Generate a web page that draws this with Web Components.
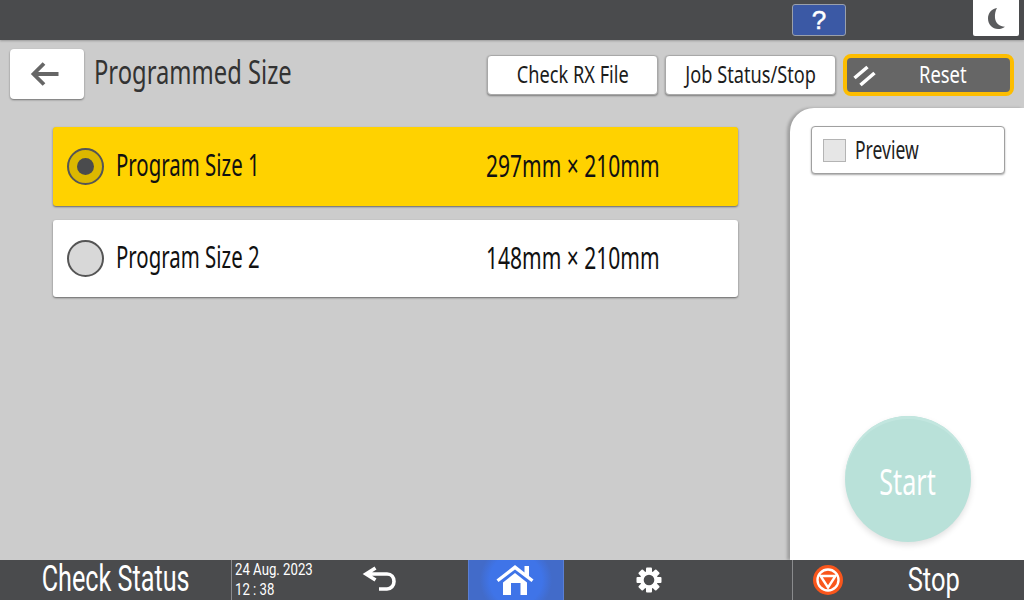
<!DOCTYPE html>
<html lang="en">
<head>
<meta charset="utf-8">
<title>Programmed Size</title>
<style>
  html, body { margin: 0; padding: 0; height: 100%; }
  body { font-family: "Noto Sans", "Open Sans", sans-serif; overflow: hidden; }
</style>
</head>
<body>
<panel-screen></panel-screen>

<script>
// condensed text: the panel font is narrow, so squeeze the real text horizontally
class NarrowText extends HTMLElement {
    connectedCallback() {
        this.attachShadow({ mode: 'open' });
        this.shadowRoot.innerHTML = `
            <style>
                :host {
                    display: inline-block;
                    white-space: nowrap;
                    transform: scaleX(var(--squeeze, 0.76));
                    transform-origin: var(--origin, center) center;
                }
            </style>
            <slot></slot>
        `;
    }
}

class TopBar extends HTMLElement {
    connectedCallback() {
        this.attachShadow({ mode: 'open' });
        this.shadowRoot.innerHTML = `
            <style>
                :host {
                    display: flex;
                    height: 40px;
                    background: #4a4b4d;
                    box-sizing: border-box;
                    padding: 0 5px 0 792px;
                    box-shadow: 0 1px 2px rgba(0, 0, 0, 0.25);
                    position: relative;
                    z-index: 2;
                }
                .help {
                    width: 54px;
                    height: 32px;
                    margin-top: 4px;
                    box-sizing: border-box;
                    background: #3b59a5;
                    border: 1px solid #9aa0ab;
                    border-radius: 3px;
                    color: #fff;
                    font: 400 26px/30px "Liberation Sans", sans-serif;
                    -webkit-text-stroke: 0.5px #fff;
                    text-align: center;
                }
                .mode {
                    width: 46px;
                    height: 36px;
                    margin-left: auto;
                    background: #fff;
                    border-radius: 0 0 2px 2px;
                    display: flex;
                    align-items: center;
                    justify-content: center;
                }
            </style>
            <div class="help">?</div>
            <div class="mode">
                <svg width="24" height="24" viewBox="0 0 24 24"><path d="M13 2C7.500 3 4 7 4 12.500C4 18.500 8.500 23 14 23C16.500 23 19 22.200 21 20.700C15.500 20.700 11.500 17 11 12C10.700 8 11.500 4.500 13 2Z" fill="#5a5b5d"/></svg>
            </div>
        `;
    }
}

class ActionButton extends HTMLElement {
    connectedCallback() {
        this.attachShadow({ mode: 'open' });
        this.shadowRoot.innerHTML = `
            <style>
                :host {
                    display: flex;
                    align-items: center;
                    justify-content: center;
                    width: 171px;
                    height: 40px;
                    box-sizing: border-box;
                    padding-bottom: 2px;
                    background: #fff;
                    border: 1px solid #a8a8a8;
                    border-radius: 4px;
                    box-shadow: 0 1px 2px rgba(0, 0, 0, 0.4);
                    color: #1c1c1c;
                    font-size: 23px;
                    --squeeze: 0.79;
                }
            </style>
            <slot></slot>
        `;
    }
}

class ResetButton extends HTMLElement {
    connectedCallback() {
        this.attachShadow({ mode: 'open' });
        this.shadowRoot.innerHTML = `
            <style>
                :host {
                    display: flex;
                    align-items: center;
                    width: 171px;
                    height: 42px;
                    box-sizing: border-box;
                    padding-left: 6px;
                    padding-bottom: 2px;
                    background: #666;
                    border: 4px solid #fdbd00;
                    border-radius: 8px;
                    color: #fff;
                    font-size: 23px;
                    --squeeze: 0.8;
                }
                svg { flex: none; margin-top: 2px; }
                .label { flex: 1; text-align: center; padding-right: 2px; }
            </style>
            <svg width="24" height="24" viewBox="0 0 24 24"><path d="M1.500 15L14.500 4M7.500 22L21.500 10" stroke="#fff" stroke-width="3.600" fill="none"/></svg>
            <div class="label"><slot></slot></div>
        `;
    }
}

class PageHeader extends HTMLElement {
    connectedCallback() {
        this.attachShadow({ mode: 'open' });
        this.shadowRoot.innerHTML = `
            <style>
                :host {
                    display: flex;
                    height: 68px;
                    box-sizing: border-box;
                    padding: 9px 10px 0 10px;
                }
                .back {
                    flex: none;
                    width: 74px;
                    height: 50px;
                    background: #fff;
                    border-radius: 4px;
                    box-shadow: 0 1px 2px rgba(0, 0, 0, 0.45);
                    display: flex;
                    align-items: center;
                    justify-content: center;
                }
                .back svg { margin-right: 4px; }
                .title {
                    flex: 1;
                    height: 50px;
                    padding-left: 10px;
                    font-size: 33px;
                    line-height: 46px;
                    color: #333;
                    --origin: left;
                    --squeeze: 0.72;
                }
                .actions {
                    display: flex;
                    gap: 7px;
                    padding-top: 6px;
                    align-items: flex-start;
                }
                reset-button { margin-top: -1px; }
            </style>
            <div class="back">
                <svg width="30" height="26" viewBox="0 0 30 26"><path d="M28.500 13H4M14 2.500L3.500 13L14 23.500" stroke="#666" stroke-width="3.800" fill="none"/></svg>
            </div>
            <div class="title"><narrow-text>Programmed Size</narrow-text></div>
            <div class="actions">
                <action-button><narrow-text>Check RX File</narrow-text></action-button>
                <action-button><narrow-text>Job Status/Stop</narrow-text></action-button>
                <reset-button><narrow-text>Reset</narrow-text></reset-button>
            </div>
        `;
    }
}

class SizeRow extends HTMLElement {
    connectedCallback() {
        this.attachShadow({ mode: 'open' });
        const on = this.hasAttribute('selected');
        this.shadowRoot.innerHTML = `
            <style>
                :host {
                    display: flex;
                    align-items: center;
                    height: ${on ? 79 : 77}px;
                    box-sizing: border-box;
                    padding-left: 14px;
                    background: ${on ? '#ffd200' : '#fff'};
                    border-radius: 3px;
                    box-shadow: 0 1px 2px rgba(0, 0, 0, 0.5);
                    color: #111;
                    font-size: 30px;
                    --origin: left;
                }
                .radio {
                    flex: none;
                    width: 37px;
                    height: 37px;
                    box-sizing: border-box;
                    border-radius: 50%;
                    border: 2px solid #555;
                    background: ${on ? '#dcb800' : '#d8d8d8'};
                    display: flex;
                    align-items: center;
                    justify-content: center;
                }
                .dot {
                    width: 17px;
                    height: 17px;
                    border-radius: 50%;
                    background: #4a4b4d;
                    display: ${on ? 'block' : 'none'};
                }
                .name { width: 370px; margin-left: 12px; padding-bottom: 5px; --squeeze: 0.68; }
                .dims { padding-bottom: 3px; --squeeze: 0.7; }
            </style>
            <div class="radio"><div class="dot"></div></div>
            <div class="name"><slot name="name"></slot></div>
            <div class="dims"><slot name="dims"></slot></div>
        `;
    }
}

class PreviewToggle extends HTMLElement {
    connectedCallback() {
        this.attachShadow({ mode: 'open' });
        this.shadowRoot.innerHTML = `
            <style>
                :host {
                    display: flex;
                    align-items: center;
                    height: 48px;
                    box-sizing: border-box;
                    padding: 0 0 3px 11px;
                    background: #fff;
                    border: 1px solid #a0a0a0;
                    border-radius: 4px;
                    box-shadow: 0 1px 2px rgba(0, 0, 0, 0.35);
                    color: #222;
                    font-size: 25px;
                    --origin: left;
                    --squeeze: 0.7;
                }
                .box {
                    flex: none;
                    width: 23px;
                    height: 23px;
                    margin-top: 3px;
                    box-sizing: border-box;
                    background: #e6e6e6;
                    border: 1px solid #b4b4b4;
                    margin-right: 9px;
                }
            </style>
            <div class="box"></div>
            <slot></slot>
        `;
    }
}

class StartButton extends HTMLElement {
    connectedCallback() {
        this.attachShadow({ mode: 'open' });
        this.shadowRoot.innerHTML = `
            <style>
                :host {
                    display: flex;
                    align-items: center;
                    justify-content: center;
                    width: 126px;
                    height: 126px;
                    box-sizing: border-box;
                    padding-top: 3px;
                    border-radius: 50%;
                    background: #b9e1d9;
                    box-shadow: inset 0 3px 0 #c2e6df, 0 3px 6px rgba(0, 0, 0, 0.12);
                    color: #fff;
                    font-size: 37px;
                    --squeeze: 0.68;
                }
            </style>
            <slot></slot>
        `;
    }
}

class SidePanel extends HTMLElement {
    connectedCallback() {
        this.attachShadow({ mode: 'open' });
        this.shadowRoot.innerHTML = `
            <style>
                :host {
                    display: flex;
                    flex-direction: column;
                    width: 234px;
                    flex: none;
                    box-sizing: border-box;
                    padding: 18px 19px 18px 21px;
                    background: #fff;
                    border-radius: 24px 0 0 0;
                    box-shadow: -3px 0 3px rgba(0, 0, 0, 0.22);
                }
                .start { margin-top: auto; align-self: center; }
            </style>
            <preview-toggle><narrow-text>Preview</narrow-text></preview-toggle>
            <div class="start"><start-button><narrow-text>Start</narrow-text></start-button></div>
        `;
    }
}

class BottomBar extends HTMLElement {
    connectedCallback() {
        this.attachShadow({ mode: 'open' });
        this.shadowRoot.innerHTML = `
            <style>
                :host {
                    display: flex;
                    height: 40px;
                    background: #4a4b4d;
                    color: #fff;
                    font-family: Roboto, "Noto Sans", sans-serif;
                    position: relative;
                    z-index: 2;
                }
                .cell { display: flex; align-items: center; justify-content: center; box-sizing: border-box; }
                .check { width: 231px; font-size: 36px; line-height: 38px; align-items: flex-start; --squeeze: 0.7; }
                .date {
                    width: 105px;
                    display: block;
                    padding: 0 0 0 3px;
                    border-left: 1px solid #8a8b8d;
                    font-size: 16.500px;
                    line-height: 19.500px;
                    --origin: left;
                    --squeeze: 0.8;
                }
                .date div { white-space: nowrap; }
                .undo { width: 88px; }
                .undo svg { margin-top: -4px; }
                .gap { width: 44px; }
                .home {
                    width: 96px;
                    background: radial-gradient(circle at 50% 50%, #3f74e8 0, #3f74e8 26px, #426bc9 36px);
                    border-left: 1px solid #5a7fd4;
                    border-right: 1px solid #5a7fd4;
                }
                .gear { width: 170px; }
                .gap2 { width: 58px; }
                .stop {
                    flex: 1;
                    justify-content: flex-start;
                    border-left: 1px solid #8a8b8d;
                    padding-left: 20px;
                    font-size: 34px;
                    line-height: 38px;
                    --squeeze: 0.75;
                }
                .stop .label { flex: 1; text-align: center; padding-bottom: 2px; }
            </style>
            <div class="cell check"><narrow-text>Check Status</narrow-text></div>
            <div class="cell date">
                <div><narrow-text>24 Aug. 2023</narrow-text></div>
                <div><narrow-text>12 : 38</narrow-text></div>
            </div>
            <div class="cell undo">
                <svg width="36" height="28" viewBox="0 0 36 28"><path d="M13.500 4L4 10L13.500 16M4.500 10H25C29.500 10 32 13.500 32 17.500C32 21.500 29 25 25 25H17" fill="none" stroke="#fff" stroke-width="3.600"/></svg>
            </div>
            <div class="gap"></div>
            <div class="cell home">
                <svg width="40" height="34" viewBox="0 0 40 34"><path d="M0.500 16.500L19 2L28.500 9.500V3H33V13L37.500 16.500L35.500 19L19 6.500L2.500 19Z" fill="#fff"/><path d="M7 19.500L19 10L31 19.500V32H7ZM15 20V32H24.500V20Z" fill="#fff" fill-rule="evenodd"/></svg>
            </div>
            <div class="cell gear">
                <svg width="26" height="26" viewBox="-13 -13 26 26">
                    <g fill="#fff">
                        <rect x="-3" y="-12.500" width="6" height="25" rx="1"/>
                        <rect x="-3" y="-12.500" width="6" height="25" rx="1" transform="rotate(45)"/>
                        <rect x="-3" y="-12.500" width="6" height="25" rx="1" transform="rotate(90)"/>
                        <rect x="-3" y="-12.500" width="6" height="25" rx="1" transform="rotate(135)"/>
                    </g>
                    <circle r="9" fill="#fff"/>
                    <circle r="5.300" fill="#4a4b4d"/>
                </svg>
            </div>
            <div class="gap2"></div>
            <div class="cell stop">
                <svg width="30" height="30" viewBox="0 0 30 30"><circle cx="15" cy="15" r="15" fill="#f9561c"/><circle cx="15" cy="15" r="10.500" fill="none" stroke="#fff" stroke-width="2.400"/><path d="M7.500 11H22.500L15 22.500Z" fill="none" stroke="#fff" stroke-width="2.400"/></svg>
                <div class="label"><narrow-text>Stop</narrow-text></div>
            </div>
        `;
    }
}

class PanelScreen extends HTMLElement {
    connectedCallback() {
        this.attachShadow({ mode: 'open' });
        this.shadowRoot.innerHTML = `
            <style>
                :host {
                    display: flex;
                    flex-direction: column;
                    width: 1024px;
                    height: 600px;
                    background: #cccccc;
                }
                .content { flex: 1; display: flex; min-height: 0; }
                .list {
                    flex: 1;
                    display: flex;
                    flex-direction: column;
                    gap: 14px;
                    padding: 19px 52px 0 53px;
                }
            </style>
            <top-bar></top-bar>
            <page-header></page-header>
            <div class="content">
                <div class="list">
                    <size-row selected>
                        <narrow-text slot="name">Program Size 1</narrow-text>
                        <narrow-text slot="dims">297mm × 210mm</narrow-text>
                    </size-row>
                    <size-row>
                        <narrow-text slot="name">Program Size 2</narrow-text>
                        <narrow-text slot="dims">148mm × 210mm</narrow-text>
                    </size-row>
                </div>
                <side-panel></side-panel>
            </div>
            <bottom-bar></bottom-bar>
        `;
    }
}

customElements.define('narrow-text', NarrowText);
customElements.define('top-bar', TopBar);
customElements.define('action-button', ActionButton);
customElements.define('reset-button', ResetButton);
customElements.define('page-header', PageHeader);
customElements.define('size-row', SizeRow);
customElements.define('preview-toggle', PreviewToggle);
customElements.define('start-button', StartButton);
customElements.define('side-panel', SidePanel);
customElements.define('bottom-bar', BottomBar);
customElements.define('panel-screen', PanelScreen);
</script>
</body>
</html>
